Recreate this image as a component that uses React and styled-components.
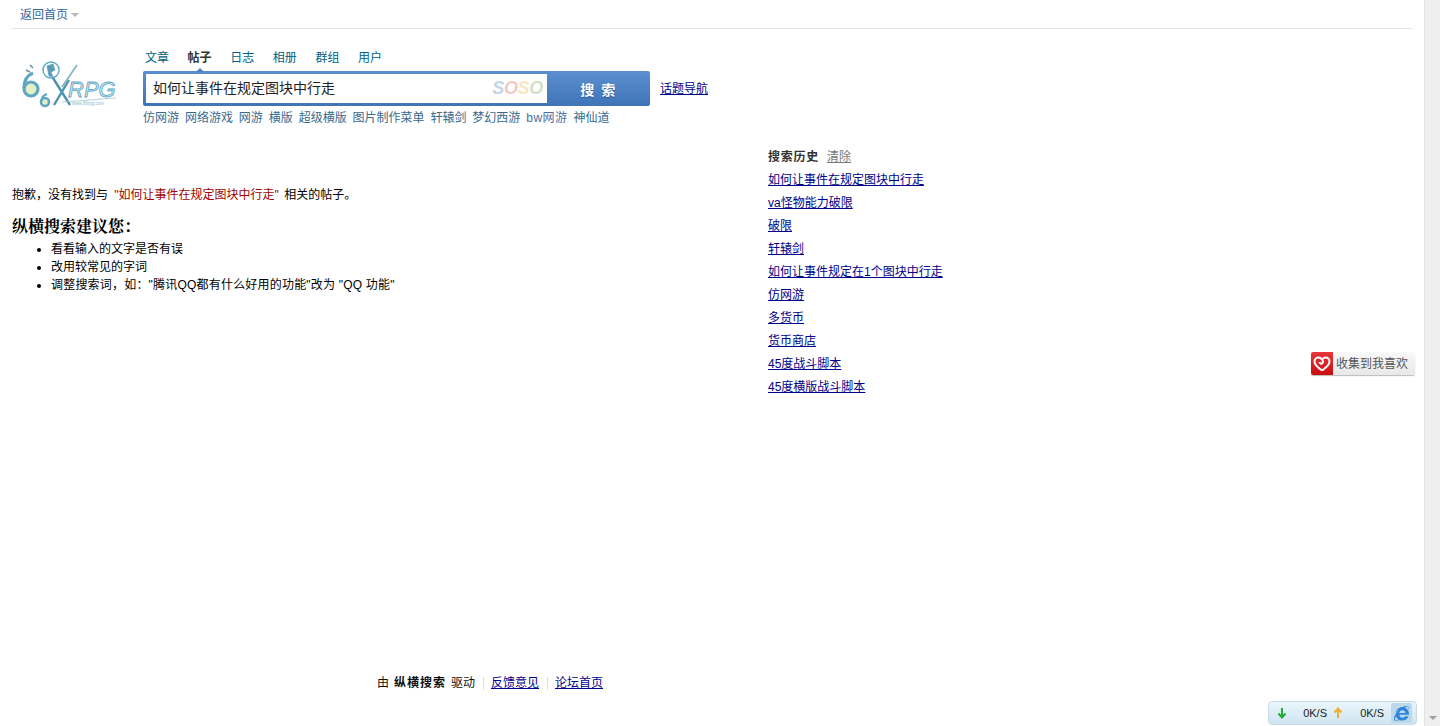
import styled, { createGlobalStyle } from 'styled-components'
import { FaInternetExplorer } from 'react-icons/fa'

const GlobalStyle = createGlobalStyle`
  html, body {
    margin: 0;
    padding: 0;
    background: #fff;
    overflow: hidden;
  }
  body {
    font-family: "Liberation Sans", "Noto Sans CJK SC", sans-serif;
    font-size: 12px;
    color: #000;
  }
`

const Screen = styled.div`
  display: flex;
  width: 1440px;
  height: 726px;
  overflow: hidden;
  position: relative;
`
const Page = styled.div`
  flex: 1;
  display: flex;
  flex-direction: column;
  padding: 0 11px;
  min-width: 0;
`
const TopBar = styled.div`
  height: 28px;
  flex: none;
  display: flex;
  align-items: center;
  padding-left: 9px;
  border-bottom: 1px solid #e8e8e8;
`
const BackLink = styled.span`
  color: #336699;
  line-height: 28px;
  padding-top: 1px;
`
const Caret = styled.i`
  width: 0;
  height: 0;
  margin: 2px 0 0 3px;
  border-left: 4px solid transparent;
  border-right: 4px solid transparent;
  border-top: 4px solid #b8b8b8;
`
const Header = styled.div`
  height: 115px;
  flex: none;
  display: flex;
  padding-left: 9px;
`
const LogoBox = styled.div`
  width: 123px;
  flex: none;
  padding-top: 29px;
`
const SearchArea = styled.div`
  width: 580px;
  flex: none;
  padding-top: 20px;
`
const Tabs = styled.div`
  display: flex;
  gap: 18.6px;
  height: 22px;
  padding-left: 2px;
  line-height: 18px;
`
const Tab = styled.span`
  position: relative;
  height: 18px;
  color: ${(p) => (p.$active ? '#333' : '#005f7f')};
  font-weight: ${(p) => (p.$active ? 700 : 400)};
  ${(p) =>
    p.$active &&
    `&::after {
      content: '';
      position: absolute;
      left: 8px;
      bottom: -5px;
      width: 0;
      height: 0;
      border-left: 4px solid transparent;
      border-right: 4px solid transparent;
      border-bottom: 4px solid #4a7fc1;
    }`}
`
const SearchRow = styled.div`
  display: flex;
  align-items: center;
`
const SearchBox = styled.div`
  width: 507px;
  height: 35px;
  flex: none;
  display: flex;
  box-sizing: border-box;
  border-radius: 2px;
  background: linear-gradient(#5b8fd0, #3f74b6);
  padding: 3px 0 3px 3px;
`
const InputWrap = styled.div`
  width: 401px;
  display: flex;
  align-items: center;
  justify-content: space-between;
  background: #fff;
  padding: 0 4px 0 7px;
  box-sizing: border-box;
  font-size: 14px;
  color: #222;
`
const InputText = styled.span`
  margin-bottom: 4px;
`
const Soso = styled.span`
  font-family: "Liberation Sans", sans-serif;
  font-size: 18px;
  font-style: italic;
  font-weight: 700;
  letter-spacing: -0.3px;
  opacity: 0.32;
`
const SosoLetter = styled.span`
  color: ${(p) => p.$color};
`
const SearchButton = styled.div`
  flex: 1;
  display: flex;
  align-items: center;
  justify-content: center;
  color: #fff;
  font-size: 14px;
  font-weight: 700;
  letter-spacing: 1.5px;
  text-shadow: 0 1px 1px #2c5a94;
`
const TopicLink = styled.a`
  margin: 0 0 2px 10px;
  color: #00008b;
  text-decoration: underline;
`
const HotWords = styled.div`
  display: flex;
  gap: 5.9px;
  margin-top: 2px;
  line-height: 20px;
  color: #3a6a8c;
`
const HotWord = styled.span`
  color: ${(p) => (p.$ascii ? '#4a6fa5' : '#3a6a8c')};
  letter-spacing: ${(p) => (p.$ascii ? 0.5 : 0)}px;
`
const Body = styled.div`
  flex: 1;
  display: flex;
`
const Results = styled.div`
  width: 757px;
  flex: none;
  padding: 42px 0 0 1px;
  box-sizing: border-box;
  display: flex;
  flex-direction: column;
`
const Sorry = styled.p`
  margin: 0;
  line-height: 18px;
`
const Keyword = styled.span`
  color: #a00000;
  padding: 0 2px 0 3px;
`
const SuggestTitle = styled.h3`
  margin: 12px 0 0;
  font-family: "Liberation Serif", "Noto Serif CJK SC", "Noto Sans CJK SC", serif;
  font-size: 16px;
  font-weight: 700;
  line-height: 22px;
`
const SuggestList = styled.ul`
  margin: 2px 0 0;
  padding-left: 39px;
  line-height: 18px;
`
const SuggestItem = styled.li`
  letter-spacing: ${(p) => p.$spacing || 0}px;
`
const History = styled.div`
  flex: 1;
  padding-top: 5px;
`
const HistoryHead = styled.div`
  display: flex;
  gap: 8px;
  line-height: 16px;
  margin-bottom: 4px;
  color: #333;
`
const HistoryTitle = styled.b`
  font-weight: 700;
  letter-spacing: 0.75px;
`
const ClearLink = styled.a`
  color: #777;
  text-decoration: underline;
`
const HistoryLink = styled.a`
  display: block;
  height: 23px;
  line-height: 23px;
  color: #00008b;
  text-decoration: underline;
`
const Footer = styled.div`
  height: 52px;
  flex: none;
  display: flex;
  align-items: flex-start;
  padding-left: 366px;
  line-height: 18px;
  color: #111;
`
const FooterBold = styled.b`
  margin: 0 5px;
  letter-spacing: 1px;
`
const Divider = styled.i`
  width: 1px;
  height: 13px;
  margin: 3px 7px 0 8px;
  background: #ddd;
`
const FooterLink = styled.a`
  color: #00008b;
  text-decoration: underline;
`
const Scrollbar = styled.div`
  width: 16px;
  flex: none;
  display: flex;
  flex-direction: column;
  justify-content: flex-end;
  align-items: center;
  background: #efefef;
  border-left: 1px solid #e2e2e2;
  box-sizing: border-box;
  padding-bottom: 6px;
`
const ScrollArrow = styled.i`
  width: 0;
  height: 0;
  border-left: 4px solid transparent;
  border-right: 4px solid transparent;
  border-top: 4px solid #a0a0a0;
`
const Collect = styled.div`
  position: absolute;
  left: 1311px;
  top: 352px;
  width: 104px;
  height: 23px;
  display: flex;
  border-radius: 2px;
  overflow: hidden;
  background: linear-gradient(#f8f8f8, #e8e8e8);
  box-shadow: 0 1px 1px #bbb;
`
const CollectIcon = styled.div`
  width: 22px;
  flex: none;
  display: flex;
  align-items: center;
  justify-content: center;
  background: linear-gradient(#e8363a, #c80f12);
`
const CollectText = styled.span`
  flex: 1;
  padding: 1px 0 0 3px;
  line-height: 23px;
  color: #555;
`
const Speed = styled.div`
  position: absolute;
  left: 1268px;
  top: 701px;
  width: 149px;
  height: 24px;
  display: flex;
  align-items: center;
  box-sizing: border-box;
  padding: 0 4px 0 8px;
  border: 1px solid #c8dce8;
  border-radius: 4px;
  background: linear-gradient(#eaf5fb, #cfe5f2);
  font-size: 11px;
  color: #222;
`
const SpeedValue = styled.span`
  width: ${(p) => p.$width}px;
  text-align: right;
  flex: none;
`
const UpArrow = styled.svg`
  margin-left: 6px;
`
const IeBox = styled.div`
  margin-left: auto;
  width: 21px;
  height: 20px;
  display: flex;
  align-items: center;
  justify-content: center;
  background: #bcd8ea;
  border-radius: 2px;
  color: #2f86d8;
`

const hotWords = ['仿网游', '网络游戏', '网游', '横版', '超级横版', '图片制作菜单', '轩辕剑', '梦幻西游', 'bw网游', '神仙道']
const historyWords = ['如何让事件在规定图块中行走', 'va怪物能力破限', '破限', '轩辕剑', '如何让事件规定在1个图块中行走', '仿网游', '多货币', '货币商店', '45度战斗脚本', '45度横版战斗脚本']
const tabs = ['文章', '帖子', '日志', '相册', '群组', '用户']

function Logo() {
  return (
    <svg width="98" height="52" viewBox="0 0 98 52">
      <g fill="none" stroke="#5fa8c4">
        <circle cx="11" cy="31" r="7" strokeWidth="3.2" fill="#e4efc8" />
        <path d="M4 30 C4 22 8 17 13 15" strokeWidth="3.2" />
        <circle cx="25" cy="44" r="4" strokeWidth="2.6" fill="#e4efc8" />
        <path d="M21.5 43 C21.5 39 24 37 27 36" strokeWidth="2.2" />
        <circle cx="31" cy="12" r="8" strokeWidth="1.4" />
        <path d="M27 8 L33 6 L35 12 L31 14 L33 19 L29 18 L28 13 Z" fill="#5b9ab5" strokeWidth="0.8" />
        <path d="M33 20 L50 47 M49 22 L34 47" strokeWidth="2.4" stroke="#4d93b0" />
        <path d="M57 7 L42 29" strokeWidth="1.6" stroke="#7fb0c4" />
        <path d="M6 12 L10 14 M10 7 L13 10" strokeWidth="1.5" stroke="#6a8fa0" />
        <path d="M42 44 L96 40" strokeWidth="0.8" stroke="#9cc6d6" />
      </g>
      <text x="48" y="39" fontFamily="Liberation Sans" fontSize="22" fontStyle="italic" fill="#cfe6ec" stroke="#5fa8c4" strokeWidth="0.8">RPG</text>
      <text x="52" y="47" fontFamily="Liberation Sans" fontSize="4.5" fill="#8fb8c8">www.66rpg.com</text>
    </svg>
  )
}

export default function App() {
  return (
    <Screen>
      <GlobalStyle />
      <Page>
        <TopBar>
          <BackLink>返回首页</BackLink>
          <Caret />
        </TopBar>
        <Header>
          <LogoBox>
            <Logo />
          </LogoBox>
          <SearchArea>
            <Tabs>
              {tabs.map((t) => (
                <Tab key={t} $active={t === '帖子'}>{t}</Tab>
              ))}
            </Tabs>
            <SearchRow>
              <SearchBox>
                <InputWrap>
                  <InputText>如何让事件在规定图块中行走</InputText>
                  <Soso>
                    <SosoLetter $color="#4a7fc1">S</SosoLetter>
                    <SosoLetter $color="#d9534f">O</SosoLetter>
                    <SosoLetter $color="#e8b23a">S</SosoLetter>
                    <SosoLetter $color="#6aa84f">O</SosoLetter>
                  </Soso>
                </InputWrap>
                <SearchButton>搜 索</SearchButton>
              </SearchBox>
              <TopicLink>话题导航</TopicLink>
            </SearchRow>
            <HotWords>
              {hotWords.map((w) => (
                <HotWord key={w} $ascii={w.startsWith('bw')}>{w}</HotWord>
              ))}
            </HotWords>
          </SearchArea>
        </Header>
        <Body>
          <Results>
            <Sorry>
              抱歉，没有找到与 <Keyword>"如何让事件在规定图块中行走"</Keyword> 相关的帖子。
            </Sorry>
            <SuggestTitle>纵横搜索建议您：</SuggestTitle>
            <SuggestList>
              <SuggestItem>看看输入的文字是否有误</SuggestItem>
              <SuggestItem>改用较常见的字词</SuggestItem>
              <SuggestItem $spacing={0.2}>调整搜索词，如："腾讯QQ都有什么好用的功能"改为 "QQ 功能"</SuggestItem>
            </SuggestList>
          </Results>
          <History>
            <HistoryHead>
              <HistoryTitle>搜索历史</HistoryTitle>
              <ClearLink>清除</ClearLink>
            </HistoryHead>
            {historyWords.map((w) => (
              <HistoryLink key={w}>{w}</HistoryLink>
            ))}
          </History>
        </Body>
        <Footer>
          由<FooterBold>纵横搜索</FooterBold>驱动
          <Divider />
          <FooterLink>反馈意见</FooterLink>
          <Divider />
          <FooterLink>论坛首页</FooterLink>
        </Footer>
      </Page>
      <Scrollbar>
        <ScrollArrow />
      </Scrollbar>
      <Collect>
        <CollectIcon>
          <svg width="18" height="16" viewBox="0 0 18 16" fill="none" stroke="#fff" strokeWidth="2">
            <path d="M9 14.5 C4 11 1.5 8.5 1.5 5.5 C1.5 3 3.5 1.5 5.5 1.5 C8 1.5 11 5 9.5 7 C8.5 8.2 6.5 7.5 6.5 6" />
            <path d="M9 14.5 C14 11 16.5 8.5 16.5 5.5 C16.5 3 14.5 1.5 12.5 1.5 C11.5 1.5 10.5 2 9.5 3" />
          </svg>
        </CollectIcon>
        <CollectText>收集到我喜欢</CollectText>
      </Collect>
      <Speed>
        <svg width="10" height="12" viewBox="0 0 10 12" fill="none" stroke="#22aa33" strokeWidth="2">
          <path d="M5 1 V10 M1.5 6.5 L5 10.5 L8.5 6.5" />
        </svg>
        <SpeedValue $width={40}>0K/S</SpeedValue>
        <UpArrow width="10" height="12" viewBox="0 0 10 12" fill="none" stroke="#f0b030" strokeWidth="2">
          <path d="M5 11 V2 M1.5 5.5 L5 1.5 L8.5 5.5" />
        </UpArrow>
        <SpeedValue $width={41}>0K/S</SpeedValue>
        <IeBox>
          <FaInternetExplorer size={15} />
        </IeBox>
      </Speed>
    </Screen>
  )
}
